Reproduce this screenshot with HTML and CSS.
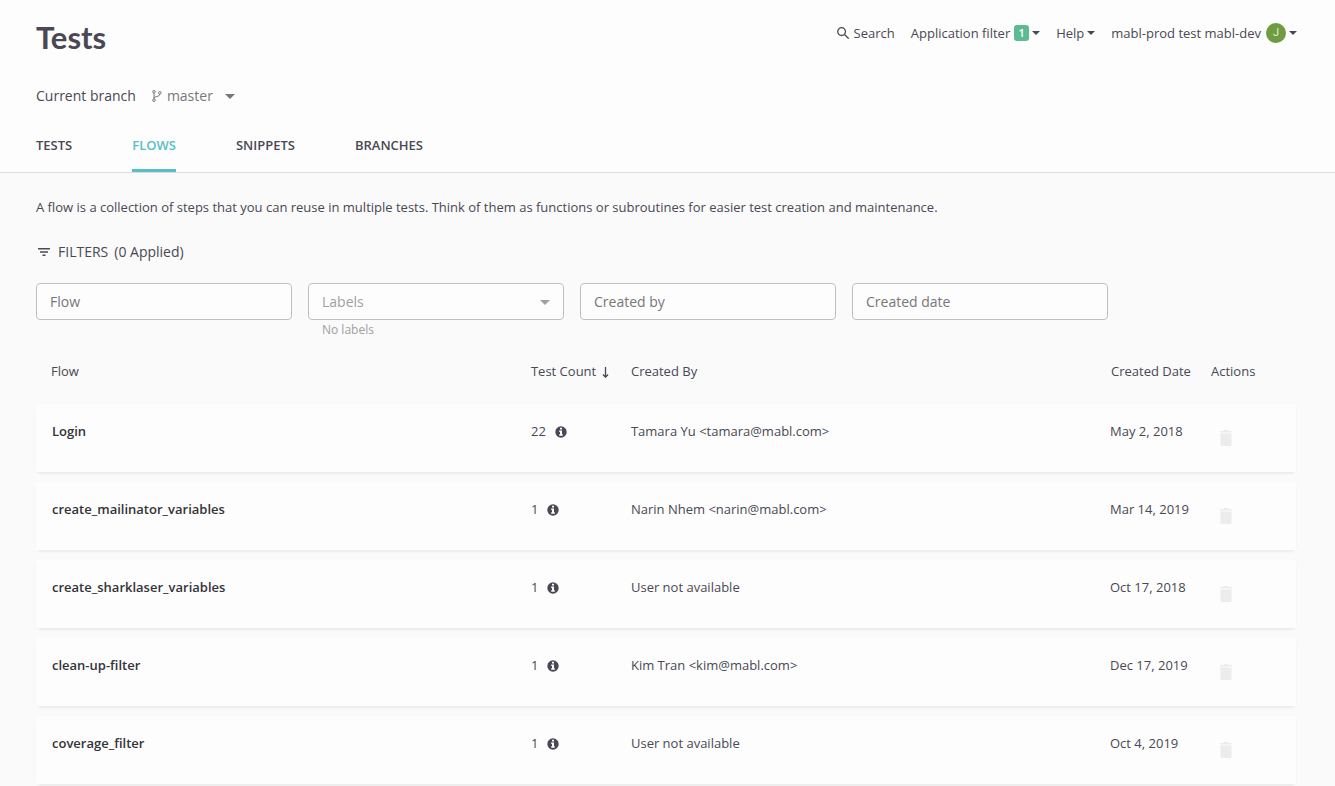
FILE: index.html
```html
<!DOCTYPE html>
<html lang="en">
<head>
<meta charset="utf-8">
<meta name="viewport" content="width=device-width, initial-scale=1">
<title>Tests</title>
<link rel="stylesheet" href="styles.css">
</head>
<body>
<svg class="sprite" aria-hidden="true">
  <symbol id="caret" viewBox="0 0 10 5"><path d="M0 0h10L5 5z"/></symbol>
  <symbol id="info" viewBox="0 0 12 12"><circle cx="6" cy="6" r="5.7"/><path fill="#fdfdfd" d="M5 1.7h2v1.8H5zM4.2 4.6H7v3.7h.8v1.4H4.2V8.3H5V6h-.8z"/></symbol>
  <symbol id="trash" viewBox="0 0 12 16"><path d="M0 1h3.500l.8-1h3.400l.8 1H12v1.500H0zM.5 3.500h11V14.500a1.500 1.500 0 0 1-1.500 1.500H2a1.500 1.500 0 0 1-1.500-1.500z"/></symbol>
</svg>
<header class="page-header">
  <div class="top-row">
    <h1 class="page-title">Tests</h1>
    <nav class="user-nav" aria-label="Account">
      <button class="nav-button search" type="button">
        <svg class="search-icon" viewBox="0 0 12 12" aria-hidden="true"><circle cx="4.600" cy="4.600" r="3.900"/><path d="M7.500 7.500l4.200 4.200"/></svg>Search
      </button>
      <button class="nav-button" type="button">Application filter<span class="count-badge">1</span><svg class="nav-caret" aria-hidden="true"><use href="#caret"/></svg></button>
      <button class="nav-button" type="button">Help<svg class="nav-caret" aria-hidden="true"><use href="#caret"/></svg></button>
      <button class="nav-button" type="button">mabl-prod test mabl-dev<span class="avatar">J</span><svg class="nav-caret" aria-hidden="true"><use href="#caret"/></svg></button>
    </nav>
  </div>
  <div class="branch-row">
    <label for="branch">Current branch</label>
    <div class="branch-picker">
      <svg class="branch-icon" viewBox="0 0 10 12" aria-hidden="true"><circle cx="2" cy="1.800" r="1.300"/><circle cx="2" cy="10.200" r="1.300"/><circle cx="7.800" cy="2.800" r="1.300"/><path d="M2 3.100v5.800M2 8.100c0-2 5.800-.8 5.800-4"/></svg>
      <select id="branch" class="branch-select"><option>master</option></select>
      <svg class="select-caret" aria-hidden="true"><use href="#caret"/></svg>
    </div>
  </div>
  <nav class="tabs" aria-label="Sections">
    <a class="tab" href="#tests">TESTS</a>
    <a class="tab active" href="#flows" aria-current="page">FLOWS</a>
    <a class="tab" href="#snippets">SNIPPETS</a>
    <a class="tab" href="#branches">BRANCHES</a>
  </nav>
</header>
<main class="content">
  <p class="intro">A flow is a collection of steps that you can reuse in multiple tests. Think of them as functions or subroutines for easier test creation and maintenance.</p>
  <button class="filters-toggle" type="button">
    <svg class="filter-icon" viewBox="0 0 12 8" aria-hidden="true"><path d="M0 .7h12M2 4h8M4.500 7.300h3"/></svg>
    <span>FILTERS</span><span>(0 Applied)</span>
  </button>
  <div class="filters">
    <input class="field" type="text" placeholder="Flow" aria-label="Flow">
    <div class="labels-filter">
      <select class="field" aria-label="Labels" aria-describedby="labels-help" disabled><option>Labels</option></select>
      <svg class="select-caret" aria-hidden="true"><use href="#caret"/></svg>
      <span class="help-text" id="labels-help">No labels</span>
    </div>
    <input class="field" type="text" placeholder="Created by" aria-label="Created by">
    <input class="field" type="text" placeholder="Created date" aria-label="Created date">
  </div>
  <table class="flows">
    <colgroup><col><col class="col-small"><col class="col-author"><col class="col-small"><col class="col-actions"></colgroup>
    <thead>
      <tr><th scope="col">Flow</th><th scope="col" aria-sort="descending">Test Count<svg class="sort-icon" viewBox="0 0 7 11" aria-hidden="true"><path d="M3.500 0v10M1 7.500l2.500 2.700L6 7.500"/></svg></th><th scope="col">Created By</th><th scope="col">Created Date</th><th scope="col">Actions</th></tr>
    </thead>
    <tbody>
      <tr><td class="name">Login</td><td>22<svg class="info-icon" aria-hidden="true"><use href="#info"/></svg></td><td>Tamara Yu &lt;tamara@mabl.com&gt;</td><td class="date">May 2, 2018</td><td><button class="delete" type="button" aria-label="Delete Login" disabled><svg class="trash-icon" aria-hidden="true"><use href="#trash"/></svg></button></td></tr>
      <tr><td class="name">create_mailinator_variables</td><td>1<svg class="info-icon" aria-hidden="true"><use href="#info"/></svg></td><td>Narin Nhem &lt;narin@mabl.com&gt;</td><td class="date">Mar 14, 2019</td><td><button class="delete" type="button" aria-label="Delete create_mailinator_variables" disabled><svg class="trash-icon" aria-hidden="true"><use href="#trash"/></svg></button></td></tr>
      <tr><td class="name">create_sharklaser_variables</td><td>1<svg class="info-icon" aria-hidden="true"><use href="#info"/></svg></td><td>User not available</td><td class="date">Oct 17, 2018</td><td><button class="delete" type="button" aria-label="Delete create_sharklaser_variables" disabled><svg class="trash-icon" aria-hidden="true"><use href="#trash"/></svg></button></td></tr>
      <tr><td class="name">clean-up-filter</td><td>1<svg class="info-icon" aria-hidden="true"><use href="#info"/></svg></td><td>Kim Tran &lt;kim@mabl.com&gt;</td><td class="date">Dec 17, 2019</td><td><button class="delete" type="button" aria-label="Delete clean-up-filter" disabled><svg class="trash-icon" aria-hidden="true"><use href="#trash"/></svg></button></td></tr>
      <tr><td class="name">coverage_filter</td><td>1<svg class="info-icon" aria-hidden="true"><use href="#info"/></svg></td><td>User not available</td><td class="date">Oct 4, 2019</td><td><button class="delete" type="button" aria-label="Delete coverage_filter" disabled><svg class="trash-icon" aria-hidden="true"><use href="#trash"/></svg></button></td></tr>
    </tbody>
  </table>
</main>
</body>
</html>
```
FILE: styles.css
```css
* { box-sizing: border-box; }

body {
  margin: 0;
  background: #fafafa;
  color: #494854;
  font: 13px/20px "Open Sans", sans-serif;
}

button, input, select {
  margin: 0;
  padding: 0;
  border: 0;
  background: none;
  color: inherit;
  font: inherit;
}

svg { flex: none; fill: currentColor; }
.sprite { display: none; }

.page-header {
  padding: 16px 38px 0 36px;
  border-bottom: 1px solid #dcdcdc;
  background: #fdfdfd;
}

.top-row {
  display: flex;
  justify-content: space-between;
  align-items: flex-start;
}

.page-title {
  margin: 0;
  font-family: Lato, "Open Sans", sans-serif;
  font-size: 31px;
  font-weight: 700;
  line-height: 42px;
}

.user-nav { display: flex; gap: 16px; padding-top: 5px; }

.nav-button {
  display: flex;
  align-items: center;
  height: 24px;
  white-space: nowrap;
}

.search { gap: 5px; }
.search-icon { width: 12px; height: 12px; fill: none; stroke: currentColor; stroke-width: 1.3; }
.nav-caret { width: 8px; height: 4px; margin-left: 3px; }

.count-badge {
  width: 15px;
  margin-left: 4px;
  border-radius: 3px;
  background: #5dbb94;
  color: #fff;
  font-size: 11px;
  font-weight: 600;
  line-height: 16px;
}

.avatar {
  width: 20px;
  margin-left: 5px;
  border-radius: 50%;
  background: #709c41;
  color: #e4edda;
  font-family: Roboto, sans-serif;
  font-size: 11px;
  line-height: 20px;
}

.branch-row {
  display: flex;
  align-items: center;
  gap: 16px;
  height: 20px;
  margin-top: 28px;
  font-size: 14px;
}

.branch-picker { display: flex; align-items: center; position: relative; color: #77777a; }
.branch-icon { width: 10px; height: 12px; margin-right: 5px; fill: none; stroke: currentColor; }
.branch-select { appearance: none; padding-right: 22px; }
.select-caret { position: absolute; right: 0; width: 10px; height: 5px; pointer-events: none; }

.tabs { display: flex; gap: 60px; margin-top: 24px; }

.tab {
  padding: 5px 0 14px;
  border-bottom: 3px solid transparent;
  color: inherit;
  font-weight: 600;
  text-decoration: none;
}

.tab.active { border-color: #57bfc9; color: #57bfc9; }

.content { padding: 24px 39px 2px 36px; }
.intro { margin: 0; }

.filters-toggle {
  display: flex;
  align-items: center;
  gap: 6px;
  margin-top: 25px;
  padding-left: 2px;
  font-size: 14px;
}

.filter-icon { width: 12px; height: 8px; margin-right: 2px; fill: none; stroke: currentColor; stroke-width: 1.4; }

.filters {
  display: grid;
  grid-template-columns: repeat(4, minmax(0, 256px));
  align-items: start;
  gap: 16px;
  margin-top: 21px;
}

.field {
  width: 100%;
  height: 37px;
  padding: 0 13px;
  border: 1px solid #c0c0c0;
  border-radius: 4px;
  background: #fdfdfd;
  font-size: 14px;
}

.field::placeholder { color: #77777a; opacity: 1; }
.labels-filter { position: relative; color: #a0a0a0; }
.labels-filter .field { appearance: none; opacity: 1; }
.labels-filter .select-caret { top: 17px; right: 14px; }
.help-text { display: block; padding-left: 14px; font-size: 12px; }

.flows {
  width: 100%;
  margin-top: 11px;
  border-spacing: 0 10px;
  table-layout: fixed;
}

.col-small { width: 100px; }
.col-author { width: 38.1%; }
.col-actions { width: 101px; }
th { height: 33px; padding: 0 0 0 16px; font-weight: 400; text-align: left; vertical-align: top; white-space: nowrap; }
th:first-child { padding-left: 15px; }
.sort-icon { width: 7px; height: 11px; margin-left: 6px; vertical-align: -2px; fill: none; stroke: currentColor; stroke-width: 1.3; }

tbody tr {
  border-radius: 5px;
  background: #fdfdfd;
  box-shadow: 0 2px 2px #ececec;
}

td { height: 68px; padding: 17px 0 0 16px; vertical-align: top; }
.name { color: #333338; font-weight: 600; overflow-wrap: anywhere; }
.date { padding-left: 15px; }
.info-icon { width: 12px; height: 12px; margin-left: 9px; vertical-align: -2px; }
.delete { display: block; padding: 9px; color: #ececec; }
.trash-icon { display: block; width: 12px; height: 16px; }
```
